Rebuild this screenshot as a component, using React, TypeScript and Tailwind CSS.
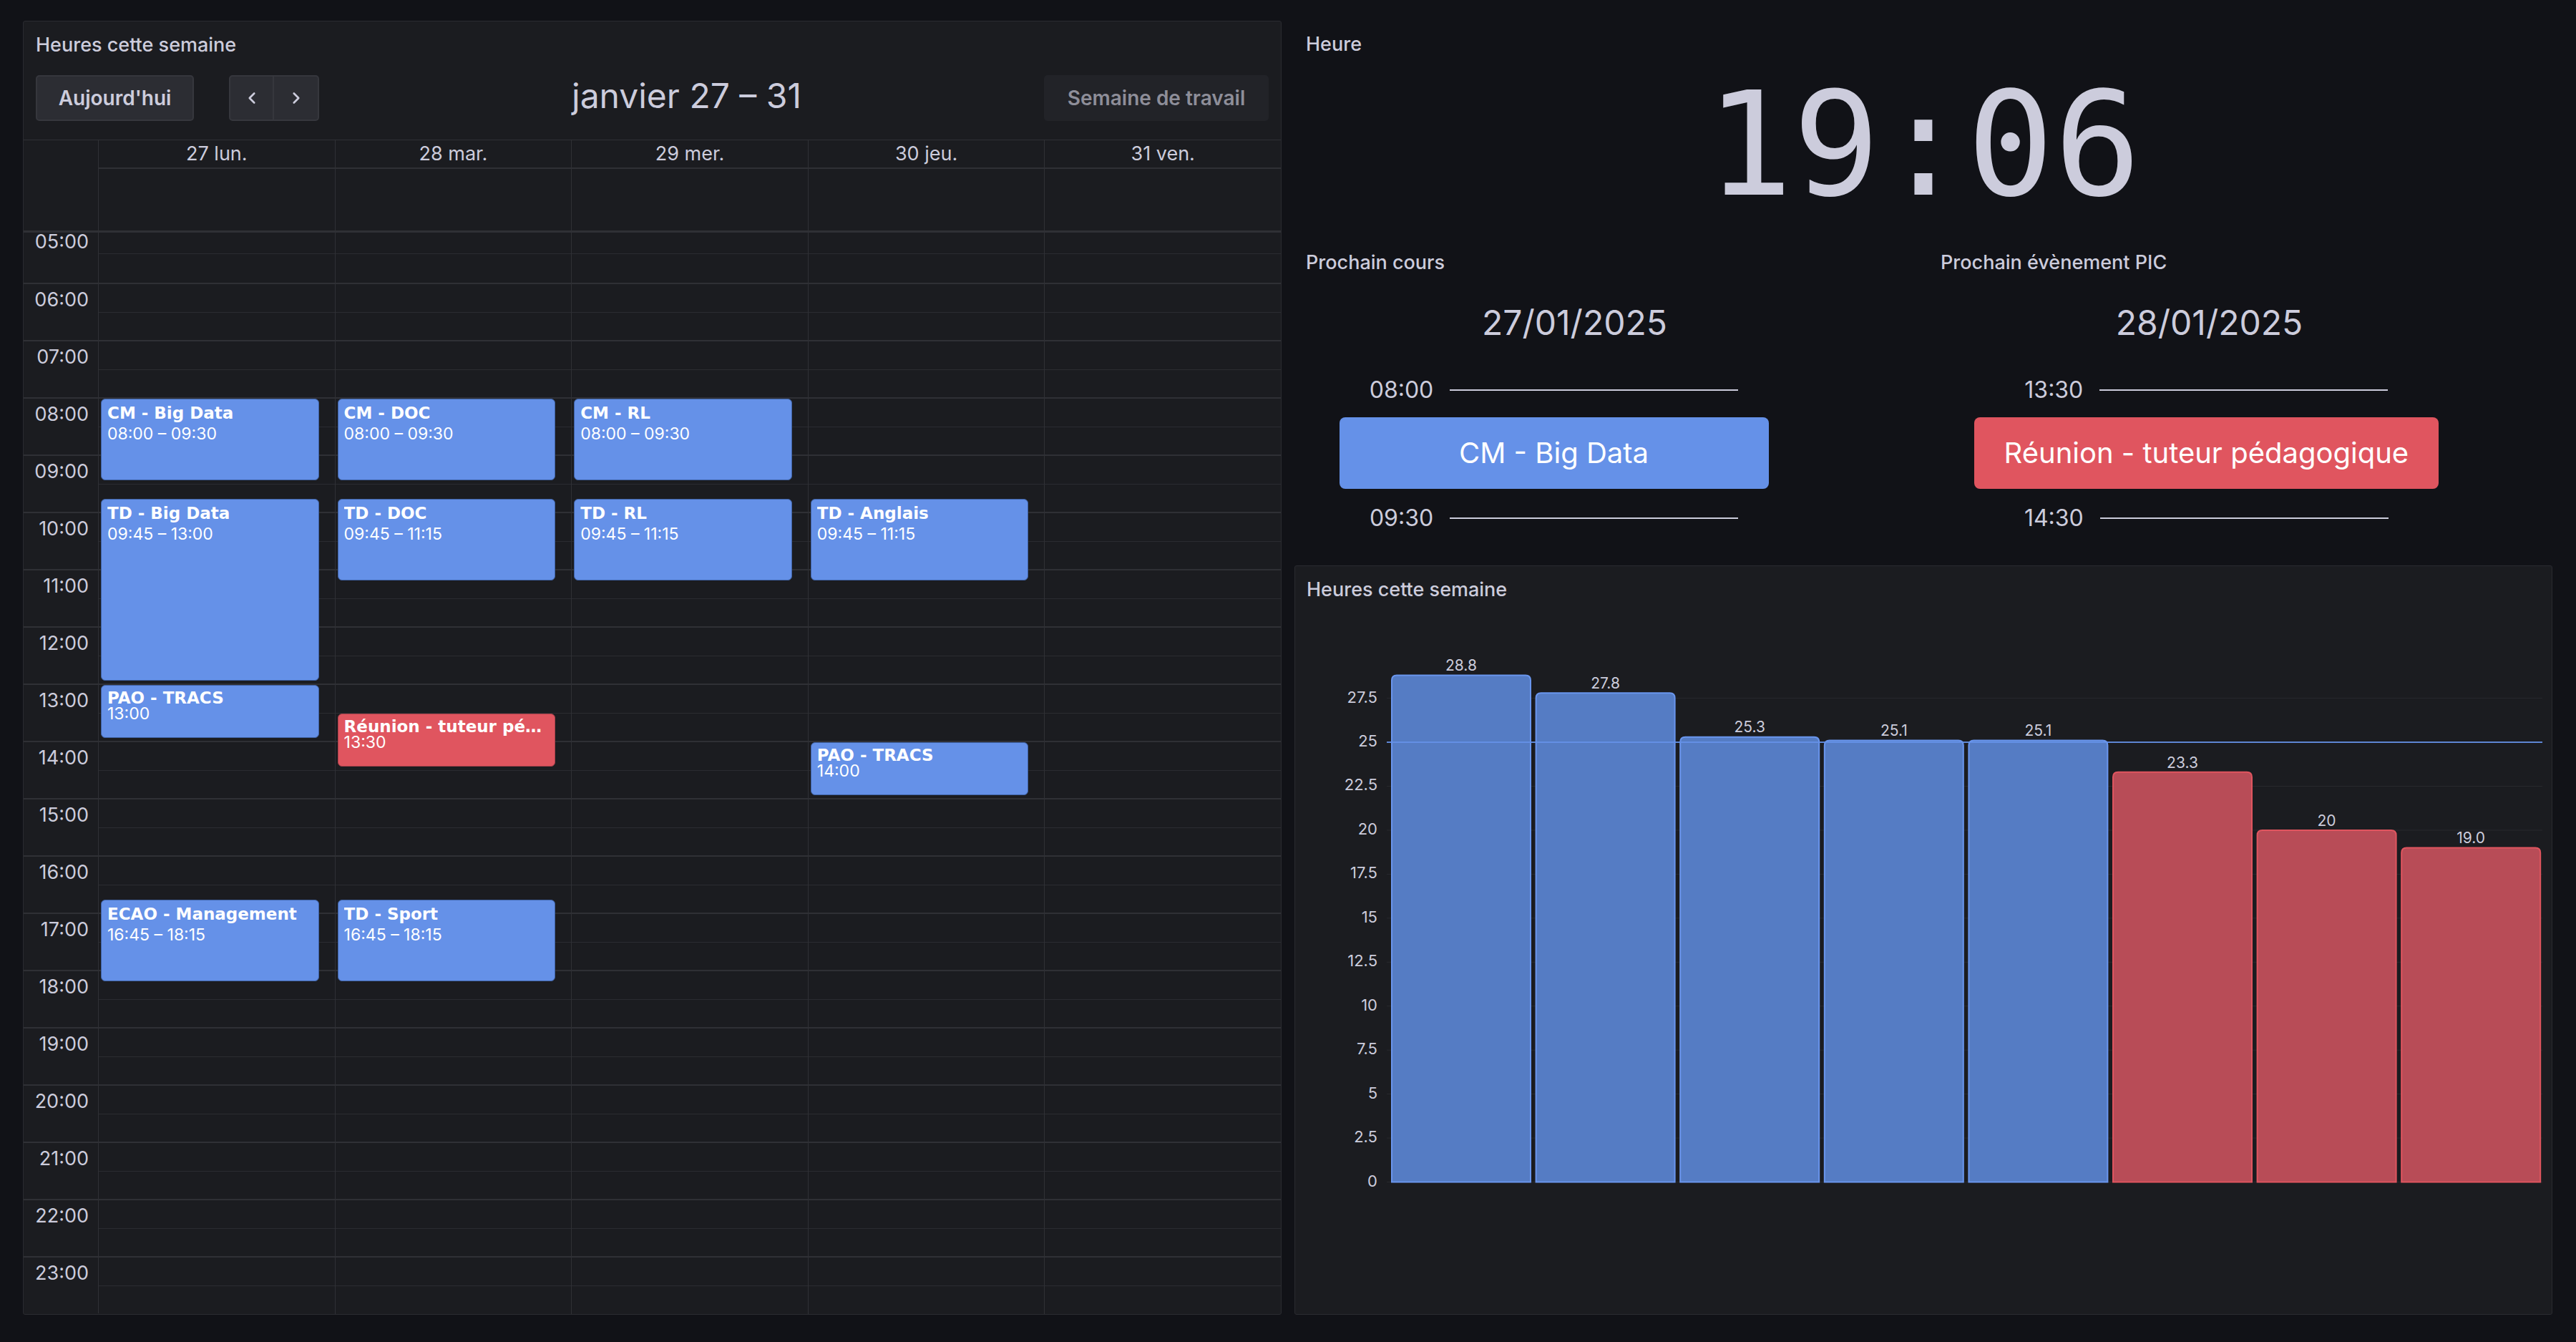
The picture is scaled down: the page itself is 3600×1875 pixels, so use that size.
import { ChevronLeft, ChevronRight } from "lucide-react";

const HOUR_H = 80;
const FIRST_HOUR = 5;
// the grid is scrolled down by this much: the 05:00 slot is partly hidden
const SCROLL = 10;
const HOURS = Array.from({ length: 19 }, (_, i) => FIRST_HOUR + i);

const days = ["27 lun.", "28 mar.", "29 mer.", "30 jeu.", "31 ven."];

type CalEvent = {
  day: number;
  title: string;
  start: number;
  end: number;
  time: string;
  red?: boolean;
  short?: boolean;
};

const events: CalEvent[] = [
  { day: 0, title: "CM - Big Data", start: 8, end: 9.5, time: "08:00 – 09:30" },
  { day: 0, title: "TD - Big Data", start: 9.75, end: 13, time: "09:45 – 13:00" },
  { day: 0, title: "PAO - TRACS", start: 13, end: 14, time: "13:00", short: true },
  { day: 0, title: "ECAO - Management", start: 16.75, end: 18.25, time: "16:45 – 18:15" },
  { day: 1, title: "CM - DOC", start: 8, end: 9.5, time: "08:00 – 09:30" },
  { day: 1, title: "TD - DOC", start: 9.75, end: 11.25, time: "09:45 – 11:15" },
  { day: 1, title: "Réunion - tuteur pédagogique", start: 13.5, end: 14.5, time: "13:30", red: true, short: true },
  { day: 1, title: "TD - Sport", start: 16.75, end: 18.25, time: "16:45 – 18:15" },
  { day: 2, title: "CM - RL", start: 8, end: 9.5, time: "08:00 – 09:30" },
  { day: 2, title: "TD - RL", start: 9.75, end: 11.25, time: "09:45 – 11:15" },
  { day: 3, title: "TD - Anglais", start: 9.75, end: 11.25, time: "09:45 – 11:15" },
  { day: 3, title: "PAO - TRACS", start: 14, end: 15, time: "14:00", short: true },
];

const bars = [
  { v: 28.8, label: "28.8", red: false },
  { v: 27.8, label: "27.8", red: false },
  { v: 25.3, label: "25.3", red: false },
  { v: 25.1, label: "25.1", red: false },
  { v: 25.1, label: "25.1", red: false },
  { v: 23.3, label: "23.3", red: true },
  { v: 20, label: "20", red: true },
  { v: 19.0, label: "19.0", red: true },
];

const ticks = [0, 2.5, 5, 7.5, 10, 12.5, 15, 17.5, 20, 22.5, 25, 27.5];

const FONT = { fontFamily: "Inter, 'Noto Sans', sans-serif" };

function EventBox({ ev }: { ev: CalEvent }) {
  const top = (ev.start - FIRST_HOUR) * HOUR_H + 2 - SCROLL;
  const height = (ev.end - ev.start) * HOUR_H - 6;
  return (
    <div
      className={`absolute left-[3px] right-[22px] rounded-[6px] border px-[8px] text-white overflow-hidden ${
        ev.red ? "bg-[#e0555f] border-[#a8414b]" : "bg-[#6591e8] border-[#3f62a4]"
      } ${ev.short ? "pt-[3px]" : "pt-[5px]"}`}
      style={{ top, height }}
    >
      <div
        className={`truncate text-[23px] font-bold ${ev.short ? "leading-[28px]" : "leading-[29px]"}`}
        style={{ fontFamily: "'DejaVu Sans', Inter, sans-serif" }}
      >
        {ev.title}
      </div>
      <div className={`text-[23px] ${ev.short ? "leading-[16px]" : "leading-[29px]"}`}>{ev.time}</div>
    </div>
  );
}

function Calendar() {
  return (
    <div className="flex flex-col flex-1 min-h-0 border-t border-[#2f3035]">
      {/* header + all-day */}
      <div className="flex border-b-[3px] border-[#2f3035]">
        <div className="w-[105px] shrink-0 border-r border-[#2f3035]" />
        <div className="flex-1 flex flex-col">
          <div className="flex h-[40px] border-b-2 border-[#2f3035]">
            {days.map((d, i) => (
              <div
                key={d}
                className={`flex-1 flex items-center justify-center text-[27px] text-[#ccccdc] ${i > 0 ? "border-l border-[#2f3035]" : ""}`}
              >
                {d}
              </div>
            ))}
          </div>
          <div className="flex h-[86px]">
            {days.map((d, i) => (
              <div key={d} className={`flex-1 ${i > 0 ? "border-l border-[#2f3035]" : ""}`} />
            ))}
          </div>
        </div>
      </div>
      {/* time grid */}
      <div className="relative flex-1 overflow-hidden">
        {HOURS.map((h, idx) => (
          <div
            key={h}
            className={`flex ${idx === 0 ? "h-[70px]" : "h-[80px] border-t-2 border-[#2f3035]"}`}
          >
            <div
              className={`w-[105px] shrink-0 border-r border-[#2f3035] text-right pr-[13px] text-[27px] leading-[24px] text-[#ccccdc] ${
                idx === 0 ? "pt-[1px]" : "pt-[10px]"
              }`}
            >
              {String(h).padStart(2, "0")}:00
            </div>
            <div className="flex-1 flex flex-col">
              <div className={idx === 0 ? "h-[29px]" : "h-[39px]"} />
              <div className="flex-1 border-t border-[#2b2c31]" />
            </div>
          </div>
        ))}
        <div className="absolute top-0 bottom-0 left-[105px] right-0 flex">
          {days.map((d, i) => (
            <div key={d} className={`relative flex-1 ${i > 0 ? "border-l border-[#2f3035]" : ""}`}>
              {events
                .filter((e) => e.day === i)
                .map((e) => (
                  <EventBox key={e.title + e.start} ev={e} />
                ))}
            </div>
          ))}
        </div>
      </div>
    </div>
  );
}

function CalendarPanel() {
  return (
    <div className="flex-1 flex flex-col border border-[#2a2b30] rounded-[3px] bg-[#1b1c20]">
      <div className="h-[66px] shrink-0 flex items-center px-[17px] text-[27px] font-medium text-[#ccccdc]">
        Heures cette semaine
      </div>
      <div className="mt-[9px] mb-[26px] h-[64px] flex items-center justify-between px-[17px]">
        <div className="flex items-center gap-[49px]">
          <button className="h-[64px] w-[221px] rounded-[5px] border-2 border-[#36373d] bg-[#2c2d33] text-[28px] font-semibold text-[#ccccdc]">
            Aujourd'hui
          </button>
          <div className="flex h-[64px] rounded-[5px] border-2 border-[#36373d] bg-[#2c2d33]">
            <div className="w-[61px] flex items-center justify-center border-r-2 border-[#36373d] text-[#ccccdc]">
              <ChevronLeft size={26} strokeWidth={2.4} />
            </div>
            <div className="w-[61px] flex items-center justify-center text-[#ccccdc]">
              <ChevronRight size={26} strokeWidth={2.4} />
            </div>
          </div>
        </div>
        <div className="-mt-[6px] ml-[14px] text-[48px] text-[#ccccdc] leading-none">janvier 27 – 31</div>
        <button className="h-[64px] w-[314px] rounded-[5px] bg-[#222328] text-[28px] font-semibold text-[#8e8e99]">
          Semaine de travail
        </button>
      </div>
      <Calendar />
    </div>
  );
}

function TimeRow({ time }: { time: string }) {
  return (
    <div className="self-center flex items-center gap-[23px] h-[40px]">
      <span className="text-[32px] text-[#ccccdc] leading-none">{time}</span>
      <span className="w-[403px] h-[2px] bg-[#ccccdc]" />
    </div>
  );
}

function NextPanel({
  title,
  date,
  start,
  end,
  label,
  red,
}: {
  title: string;
  date: string;
  start: string;
  end: string;
  label: string;
  red?: boolean;
}) {
  return (
    <div className="flex-1 h-[440px] flex flex-col">
      <div className="h-[66px] flex items-center px-[16px] text-[27px] font-medium text-[#ccccdc]">{title}</div>
      <div className="flex flex-col items-center pr-[88px]">
        <div className="w-[658px] flex flex-col">
          <div className="mt-[22px] h-[58px] flex items-center justify-center text-[48px] text-[#ccccdc]">{date}</div>
          <div className="self-start w-fit flex flex-col">
            <div className="mt-[45px] flex flex-col">
              <TimeRow time={start} />
            </div>
            <div
              className={`mt-[18px] h-[100px] min-w-[600px] px-[42px] rounded-[8px] flex items-center justify-center text-[40px] text-white ${
                red ? "bg-[#e0555f]" : "bg-[#6591e8]"
              }`}
            >
              {label}
            </div>
            <div className="mt-[21px] flex flex-col">
              <TimeRow time={end} />
            </div>
          </div>
        </div>
      </div>
    </div>
  );
}

function BarChart() {
  const zero = 794.5;
  const k = 24.58;
  return (
    <svg width={1756} height={979} className="block">
      {ticks.map((t) => (
        <g key={t}>
          <line x1={128} x2={1743} y1={zero - t * k} y2={zero - t * k} stroke="#ccccdc" strokeOpacity={0.08} strokeWidth={1} />
          <text
            x={115}
            y={zero - t * k}
            textAnchor="end"
            dominantBaseline="middle"
            fontSize={22}
            fill="#ccccdc"
            fontFamily="Inter, sans-serif"
          >
            {t}
          </text>
        </g>
      ))}
      {bars.map((b, i) => {
        const x = 135 + i * 201.6;
        const w = 194;
        const top = zero - b.v * k;
        const r = 7;
        const d = `M${x},${zero} V${top + r} Q${x},${top} ${x + r},${top} H${x + w - r} Q${x + w},${top} ${x + w},${top + r} V${zero} Z`;
        return (
          <g key={i}>
            <path
              d={d}
              fill={b.red ? "#b84c57" : "#557cc4"}
              stroke={b.red ? "#e0555f" : "#6a96ee"}
              strokeWidth={2}
            />
            <text
              x={x + w / 2}
              y={top - 12}
              textAnchor="middle"
              dominantBaseline="middle"
              fontSize={21}
              fill="#ccccdc"
              fontFamily="Inter, sans-serif"
            >
              {b.label}
            </text>
          </g>
        );
      })}
      <line x1={128} x2={1743} y1={zero - 25 * k} y2={zero - 25 * k} stroke="#6591e8" strokeOpacity={0.9} strokeWidth={2} />
    </svg>
  );
}

export default function App() {
  return (
    <div
      className="w-[3600px] h-[1875px] bg-[#111217] flex gap-[18px] pl-[32px] pr-[33px] pt-[29px] pb-[38px] overflow-hidden"
      style={FONT}
    >
      <CalendarPanel />
      <div className="flex-1 flex flex-col gap-[16px]">
        <div className="h-[289px] shrink-0 flex flex-col">
          <div className="h-[66px] flex items-center px-[16px] text-[27px] font-medium text-[#ccccdc]">Heure</div>
          <div
            className="mt-[6px] text-center text-[202px] leading-none text-[#ccccdc]"
            style={{ fontFamily: "'DejaVu Sans Mono', monospace" }}
          >
            19:06
          </div>
        </div>
        <div className="flex gap-[16px] shrink-0">
          <NextPanel title="Prochain cours" date="27/01/2025" start="08:00" end="09:30" label="CM - Big Data" />
          <NextPanel
            title="Prochain évènement PIC"
            date="28/01/2025"
            start="13:30"
            end="14:30"
            label="Réunion - tuteur pédagogique"
            red
          />
        </div>
        <div className="flex-1 flex flex-col border border-[#2a2b30] rounded-[3px] bg-[#1b1c20] overflow-hidden">
          <div className="h-[66px] shrink-0 flex items-center px-[16px] text-[27px] font-medium text-[#ccccdc]">
            Heures cette semaine
          </div>
          <BarChart />
        </div>
      </div>
    </div>
  );
}
